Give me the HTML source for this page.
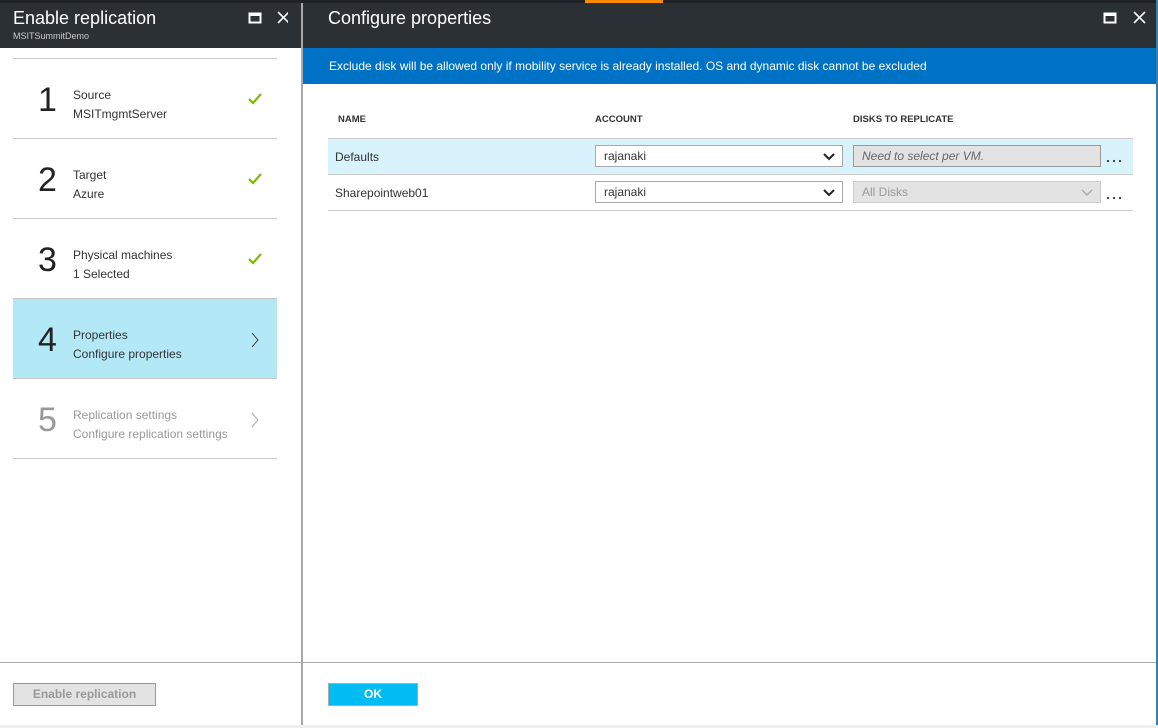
<!DOCTYPE html>
<html><head><meta charset="utf-8"><style>
*{margin:0;padding:0;box-sizing:border-box}
body{width:1158px;height:728px;position:relative;overflow:hidden;background:#fff;font-family:"Liberation Sans",sans-serif;color:#333}
.a{position:absolute}
.hdr{background:#2b3035;top:3px;height:45px}
.t{color:#fff;font-size:18px}
.line{height:1px;background:#c8c8c8}
.num{font-size:34px;color:#222;left:38px}
.lbl{font-size:12px;color:#333;left:73px;line-height:19px}
.chk{left:247px}
.th{font-size:9.5px;font-weight:bold;color:#333;top:114px}
.sel{height:22px;border:1px solid #aaa;background:#fff;font-size:12px;padding-left:8px;line-height:20px}
</style></head><body>
<div class="a" style="left:0;top:0;width:1158px;height:3px;background:#1e2227"></div>
<div class="a" style="left:585px;top:0;width:78px;height:3px;background:#ff8c00"></div>
<div class="a hdr" style="left:0;width:301px"></div>
<div class="a hdr" style="left:303px;width:853px"></div>
<div class="a" style="left:301px;top:3px;width:2px;height:722px;background:#aaa"></div>
<div class="a" style="left:1156px;top:0;width:2px;height:728px;background:#3a7fae"></div>
<div class="a" style="left:0;top:725px;width:1158px;height:3px;background:#eee"></div>

<div class="a t" style="left:13px;top:8px">Enable replication</div>
<div class="a" style="left:13px;top:31px;font-size:9px;color:#ccc">MSITSummitDemo</div>
<svg class="a" style="left:248px;top:11px" width="40" height="14"><rect x="1.5" y="2.5" width="11" height="9" fill="none" stroke="#fff" stroke-width="2"/><rect x="1" y="2" width="12" height="3" fill="#fff"/><path d="M30 1l11 11M41 1l-11 11" stroke="#fff" stroke-width="1.6"/></svg>
<div class="a t" style="left:328px;top:8px">Configure properties</div>
<svg class="a" style="left:1103px;top:11px" width="45" height="14"><rect x="1.5" y="2.5" width="11" height="9" fill="none" stroke="#fff" stroke-width="2"/><rect x="1" y="2" width="12" height="3" fill="#fff"/><path d="M31 1l11 11M42 1l-11 11" stroke="#fff" stroke-width="1.6"/></svg>

<div class="a line" style="left:13px;top:58px;width:264px"></div>
<div class="a num" style="top:81px">1</div><div class="a lbl" style="top:86px">Source<br>MSITmgmtServer</div>
<div class="a line" style="left:13px;top:138px;width:264px"></div>
<div class="a num" style="top:161px">2</div><div class="a lbl" style="top:166px">Target<br>Azure</div>
<div class="a line" style="left:13px;top:218px;width:264px"></div>
<div class="a num" style="top:241px">3</div><div class="a lbl" style="top:246px">Physical machines<br>1 Selected</div>
<div class="a line" style="left:13px;top:298px;width:264px"></div>
<div class="a" style="left:13px;top:299px;width:264px;height:79px;background:#b3e9f7"></div>
<div class="a num" style="top:321px">4</div><div class="a lbl" style="top:326px">Properties<br>Configure properties</div>
<div class="a line" style="left:13px;top:378px;width:264px"></div>
<div class="a num" style="top:401px;color:#999">5</div><div class="a lbl" style="top:406px;color:#999">Replication settings<br>Configure replication settings</div>
<div class="a line" style="left:13px;top:458px;width:264px"></div>
<svg class="a chk" style="top:92px" width="16" height="14"><path d="M2 7l4 4 8-9" fill="none" stroke="#7ab800" stroke-width="2.2"/></svg>
<svg class="a chk" style="top:172px" width="16" height="14"><path d="M2 7l4 4 8-9" fill="none" stroke="#7ab800" stroke-width="2.2"/></svg>
<svg class="a chk" style="top:252px" width="16" height="14"><path d="M2 7l4 4 8-9" fill="none" stroke="#7ab800" stroke-width="2.2"/></svg>
<svg class="a" style="left:250px;top:332px" width="10" height="16"><path d="M2 1l6 7-6 7" fill="none" stroke="#444" stroke-width="1"/></svg>
<svg class="a" style="left:250px;top:412px" width="10" height="16"><path d="M2 1l6 7-6 7" fill="none" stroke="#aaa" stroke-width="1"/></svg>

<div class="a" style="left:303px;top:48px;width:853px;height:36px;background:#0072c6;color:#fff;font-size:12px;padding:11px 0 0 26px">Exclude disk will be allowed only if mobility service is already installed. OS and dynamic disk cannot be excluded</div>

<div class="a th" style="left:338px">NAME</div>
<div class="a th" style="left:595px">ACCOUNT</div>
<div class="a th" style="left:853px">DISKS TO REPLICATE</div>
<div class="a" style="left:328px;top:138px;width:805px;height:1px;background:#ccc"></div>
<div class="a" style="left:328px;top:139px;width:805px;height:35px;background:#d8f3fb"></div>
<div class="a" style="left:328px;top:174px;width:805px;height:1px;background:#ccc"></div>
<div class="a" style="left:328px;top:210px;width:805px;height:1px;background:#ccc"></div>
<div class="a" style="left:335px;top:150px;font-size:12px">Defaults</div>
<div class="a" style="left:335px;top:186px;font-size:12px">Sharepointweb01</div>
<div class="a sel" style="left:595px;top:145px;width:248px">rajanaki</div>
<div class="a sel" style="left:595px;top:181px;width:248px">rajanaki</div>
<svg class="a" style="left:823px;top:153px" width="12" height="8"><path d="M1 1l5 5 5-5" fill="none" stroke="#222" stroke-width="2"/></svg>
<svg class="a" style="left:823px;top:189px" width="12" height="8"><path d="M1 1l5 5 5-5" fill="none" stroke="#222" stroke-width="2"/></svg>
<div class="a sel" style="left:853px;top:145px;width:248px;background:#e3e3e3;border-color:#999;color:#666;font-style:italic">Need to select per VM.</div>
<div class="a sel" style="left:853px;top:181px;width:248px;background:#e3e3e3;border-color:#ccc;color:#999">All Disks</div>
<svg class="a" style="left:1081px;top:189px" width="12" height="8"><path d="M1 1l5 5 5-5" fill="none" stroke="#aaa" stroke-width="1.5"/></svg>
<svg class="a" style="left:1106px;top:159px" width="18" height="4"><circle cx="2" cy="2" r="1.1" fill="#333"/><circle cx="8" cy="2" r="1.1" fill="#333"/><circle cx="14" cy="2" r="1.1" fill="#333"/></svg>
<svg class="a" style="left:1106px;top:196px" width="18" height="4"><circle cx="2" cy="2" r="1.1" fill="#333"/><circle cx="8" cy="2" r="1.1" fill="#333"/><circle cx="14" cy="2" r="1.1" fill="#333"/></svg>

<div class="a" style="left:0;top:662px;width:1156px;height:1px;background:#aaa"></div>
<div class="a" style="left:13px;top:683px;width:143px;height:23px;background:#e3e3e3;border:1px solid #999;color:#999;font-size:12px;font-weight:bold;text-align:center;line-height:21px">Enable replication</div>
<div class="a" style="left:328px;top:683px;width:90px;height:23px;background:#00bcf2;border:1px solid #aaa;color:#fff;font-size:12px;font-weight:bold;text-align:center;line-height:21px">OK</div>
</body></html>
